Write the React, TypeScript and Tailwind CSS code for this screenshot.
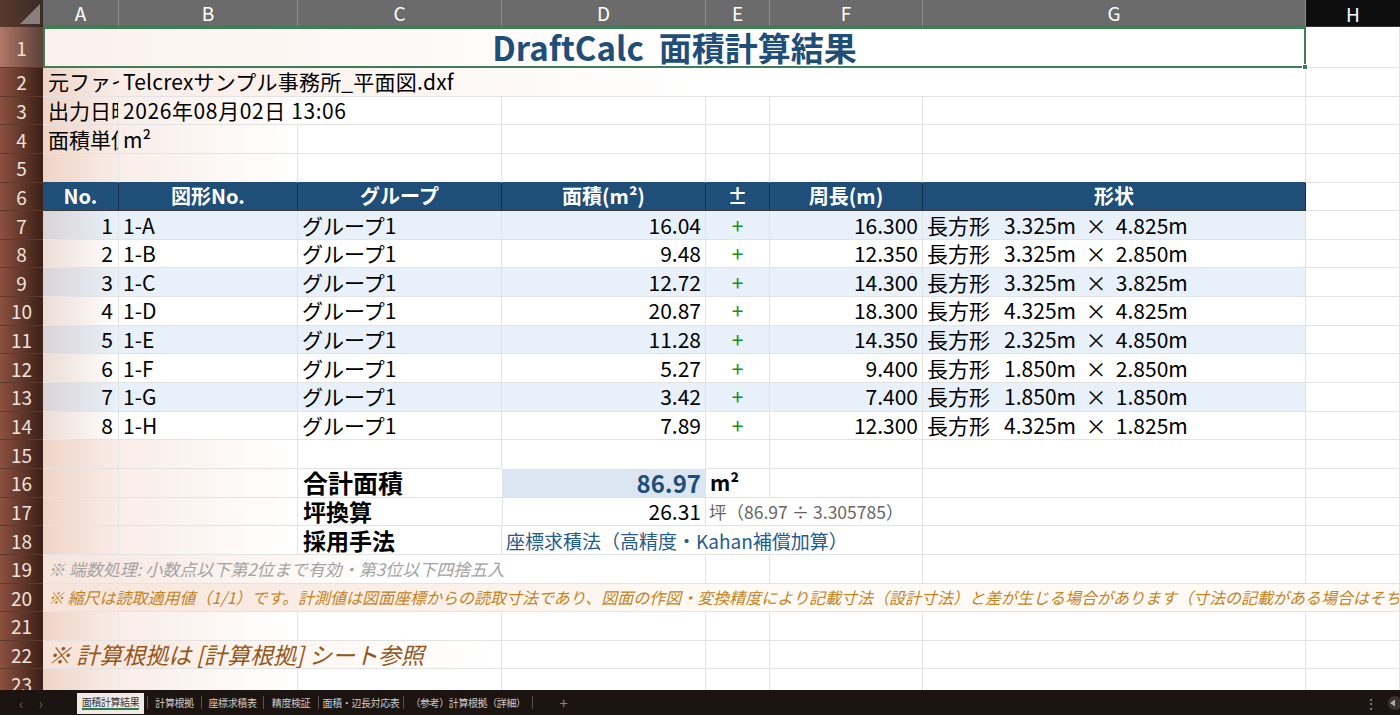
import React from 'react';

const W = {
  A: 'w-[76px]',
  B: 'w-[179px]',
  C: 'w-[204px]',
  D: 'w-[204px]',
  E: 'w-[64px]',
  F: 'w-[153px]',
  G: 'w-[383px]',
};

// warm light falling on the left side of the sheet
const WARM_A = 'bg-linear-to-r from-[#efd4c6] to-[#f9ede7]';
const WARM_B = 'bg-linear-to-r from-[#f9ede7] to-white';

const shapes = [
  { no: 1, id: '1-A', area: '16.04', per: '16.300', a: '3.325m', b: '4.825m' },
  { no: 2, id: '1-B', area: '9.48', per: '12.350', a: '3.325m', b: '2.850m' },
  { no: 3, id: '1-C', area: '12.72', per: '14.300', a: '3.325m', b: '3.825m' },
  { no: 4, id: '1-D', area: '20.87', per: '18.300', a: '4.325m', b: '4.825m' },
  { no: 5, id: '1-E', area: '11.28', per: '14.350', a: '2.325m', b: '4.850m' },
  { no: 6, id: '1-F', area: '5.27', per: '9.400', a: '1.850m', b: '2.850m' },
  { no: 7, id: '1-G', area: '3.42', per: '7.400', a: '1.850m', b: '1.850m' },
  { no: 8, id: '1-H', area: '7.89', per: '12.300', a: '4.325m', b: '1.825m' },
];

const tabs = [
  { label: '計算根拠', w: 'w-[53px]' },
  { label: '座標求積表', w: 'w-[61px]' },
  { label: '精度検証', w: 'w-[54px]' },
  { label: '面積・辺長対応表', w: 'w-[84px]' },
  { label: '（参考）計算根拠（詳細）', w: 'w-[128px]' },
];

function Cell({ w, className = '', children }: { w: string; className?: string; children?: React.ReactNode }) {
  return (
    <div
      className={`${w} shrink-0 h-full flex items-center overflow-hidden whitespace-pre border-r border-b border-[#e3e3e3] ${className}`}
    >
      {children}
    </div>
  );
}

function Row({ n, children, h = 'h-[28.65px]', head = 'from-[#8d5140] to-[#3c2118]' }: { n: number; children?: React.ReactNode; h?: string; head?: string }) {
  return (
    <div className={`flex shrink-0 ${h}`}>
      <div
        className={`w-[43px] shrink-0 h-full flex items-center justify-center text-[19px] text-[#efe2da] bg-linear-to-r ${head} border-b border-[#5e3a2e]`}
      >
        {n}
      </div>
      {children}
    </div>
  );
}

// a run of empty cells; A and B pick up the warm wash
function Empty({ cols }: { cols: (keyof typeof W)[] }) {
  return (
    <>
      {cols.map((c) => (
        <Cell key={c} w={W[c]} className={c === 'A' ? WARM_A : c === 'B' ? WARM_B : ''} />
      ))}
    </>
  );
}

const App: React.FC = () => {
  return (
    <div className="w-[1400px] h-[715px] overflow-hidden flex flex-col bg-white text-black font-['Noto_Sans_CJK_JP',sans-serif] text-[21px] leading-none">
      <div className="h-[690px] shrink-0 overflow-hidden flex flex-col">
        {/* column letters */}
        <div className="flex h-[27px] shrink-0 text-[19px] text-white">
          <div className="w-[43px] shrink-0 relative bg-linear-to-r from-[#5a3a30] to-[#3a2a26]">
            <svg className="absolute right-[3px] bottom-[3px]" width="20" height="20" viewBox="0 0 20 20">
              <polygon points="20,0 20,20 0,20" fill="#8b7f7b" />
            </svg>
          </div>
          {(['A', 'B', 'C', 'D', 'E', 'F', 'G'] as const).map((c) => (
            <div
              key={c}
              className={`${W[c]} shrink-0 flex items-center justify-center bg-[#6b6b6b] border-r border-r-[#8e8e8e] border-b-2 border-b-[#3f7d55]`}
            >
              {c}
            </div>
          ))}
          <div className="flex-1 flex items-center justify-center bg-[#0e0e0e] border-b border-[#333]">H</div>
        </div>

        {/* row 1 */}
        <Row n={1} h="h-[41px]" head="from-[#b07868] to-[#5e4038]">
          <div className="relative w-[1263px] shrink-0 h-full flex items-center justify-center border-2 border-[#3f7d55] bg-linear-to-r from-[#fbf1ec] via-white to-white text-[33px] font-bold text-[#1f4e79] whitespace-pre">
            DraftCalc  面積計算結果
            <div className="absolute right-[-4px] bottom-[-4px] w-[6px] h-[6px] bg-[#3f7d55] border border-white" />
          </div>
          <Cell w="flex-1" />
        </Row>

        {/* rows 2-4 */}
        <Row n={2}>
          <Cell w={W.A} className={`pl-[5px] border-r-0 ${WARM_A}`}>元ファイル</Cell>
          <Cell w="w-[1187px]" className="pl-[4px] tracking-[0.2px] bg-linear-to-r from-[#f9ede7] via-white to-white">Telcrexサンプル事務所_平面図.dxf</Cell>
          <Cell w="flex-1" />
        </Row>
        <Row n={3}>
          <Cell w={W.A} className={`pl-[5px] ${WARM_A}`}>出力日時</Cell>
          <Cell w="w-[383px]" className="pl-[4px] tracking-[0.6px] bg-linear-to-r from-[#f9ede7] via-white to-white">2026年08月02日 13:06</Cell>
          <Empty cols={['D', 'E', 'F', 'G']} />
          <Cell w="flex-1" />
        </Row>
        <Row n={4}>
          <Cell w={W.A} className={`pl-[5px] ${WARM_A}`}>面積単位</Cell>
          <Cell w={W.B} className={`pl-[4px] ${WARM_B}`}>m²</Cell>
          <Empty cols={['C', 'D', 'E', 'F', 'G']} />
          <Cell w="flex-1" />
        </Row>
        <Row n={5}>
          {(['A', 'B', 'C', 'D', 'E', 'F', 'G'] as const).map((c) => (
            <Cell
              key={c}
              w={W[c]}
              className={`border-b-[#1f4e79] ${c === 'A' ? WARM_A : c === 'B' ? WARM_B : ''}`}
            />
          ))}
          <Cell w="flex-1" />
        </Row>

        {/* table header */}
        <Row n={6}>
          {[
            ['A', 'No.'],
            ['B', '図形No.'],
            ['C', 'グループ'],
            ['D', '面積(m²)'],
            ['E', '±'],
            ['F', '周長(m)'],
            ['G', '形状'],
          ].map(([c, t]) => (
            <Cell
              key={c}
              w={W[c as keyof typeof W]}
              className="justify-center bg-[#1f4e79] text-white font-bold text-[20px] border-r-[#12304d] border-b-[#3a3a3a]"
            >
              {t}
            </Cell>
          ))}
          <Cell w="flex-1" />
        </Row>

        {/* table body */}
        {shapes.map((s, i) => {
          const blue = i % 2 === 0;
          const bg = blue ? 'bg-[#e8f1f9]' : 'bg-white';
          const aBg = blue
            ? 'bg-linear-to-r from-[#d9d3d6] to-[#e8f1f9]'
            : 'bg-linear-to-r from-[#ecdcd5] to-white';
          const line = 'border-[#6a6a6a]';
          return (
            <Row key={s.no} n={7 + i}>
              <Cell w={W.A} className={`${aBg} ${line} justify-end pr-[5px]`}>{s.no}</Cell>
              <Cell w={W.B} className={`${bg} ${line} pl-[4px]`}>{s.id}</Cell>
              <Cell w={W.C} className={`${bg} ${line} pl-[4px]`}>グループ1</Cell>
              <Cell w={W.D} className={`${bg} ${line} justify-end pr-[4px]`}>{s.area}</Cell>
              <Cell w={W.E} className={`${bg} ${line} justify-center text-[#1e8c1e]`}>+</Cell>
              <Cell w={W.F} className={`${bg} ${line} justify-end pr-[4px]`}>{s.per}</Cell>
              <Cell w={W.G} className={`${bg} ${line} pl-[4px]`}>{`長方形   ${s.a}  ×  ${s.b}`}</Cell>
              <Cell w="flex-1" />
            </Row>
          );
        })}

        <Row n={15}>
          <Empty cols={['A', 'B', 'C']} />
          <Cell w={W.D} className="border-b-0" />
          <Empty cols={['E', 'F', 'G']} />
          <Cell w="flex-1" />
        </Row>

        {/* totals */}
        <Row n={16}>
          <Empty cols={['A', 'B']} />
          <Cell w={W.C} className="pl-[5px] font-bold text-[25px] border-r-0">合計面積</Cell>
          <Cell w={W.D} className="justify-end pr-[4px] bg-[#dbe6f2] border border-[#3d3d3d] font-bold text-[24px] text-[#1f4e79]">
            86.97
          </Cell>
          <Cell w={W.E} className="pl-[4px] font-bold text-[21px]">m²</Cell>
          <Empty cols={['F', 'G']} />
          <Cell w="flex-1" />
        </Row>
        <Row n={17}>
          <Empty cols={['A', 'B']} />
          <Cell w={W.C} className="pl-[5px] font-bold text-[23px] border-r-0">坪換算</Cell>
          <Cell w={W.D} className="justify-end pr-[4px] border-x border-b border-[#3d3d3d]">26.31</Cell>
          <Cell w="w-[217px]" className="pl-[3px] text-[17.5px] text-[#666666]">坪（86.97 ÷ 3.305785）</Cell>
          <Cell w={W.G} />
          <Cell w="flex-1" />
        </Row>
        <Row n={18}>
          <Empty cols={['A', 'B']} />
          <Cell w={W.C} className="pl-[5px] font-bold text-[23px]">採用手法</Cell>
          <Cell w="w-[421px]" className="pl-[4px] text-[19px] text-[#245b8f]">座標求積法（高精度・Kahan補償加算）</Cell>
          <Cell w={W.G} />
          <Cell w="flex-1" />
        </Row>

        {/* notes */}
        <Row n={19}>
          <Cell w="w-[663px]" className="pl-[5px] italic text-[17px] text-[#a3a3a3] bg-linear-to-r from-[#f6e4db] via-white to-white">
            ※ 端数処理: 小数点以下第2位まで有効・第3位以下四捨五入
          </Cell>
          <Empty cols={['E', 'F', 'G']} />
          <Cell w="flex-1" />
        </Row>
        <Row n={20}>
          <Cell w="flex-1" className="pl-[5px] italic text-[16px] text-[#c4831c] bg-linear-to-r from-[#f6e4db] via-[#fffaf5] to-[#fffaf5]">
            ※ 縮尺は読取適用値（1/1）です。計測値は図面座標からの読取寸法であり、図面の作図・変換精度により記載寸法（設計寸法）と差が生じる場合があります（寸法の記載がある場合はそちらを優先してください）
          </Cell>
        </Row>
        <Row n={21}>
          <Empty cols={['A', 'B', 'C', 'D', 'E', 'F', 'G']} />
          <Cell w="flex-1" />
        </Row>
        <Row n={22}>
          <Cell w="w-[459px]" className="pl-[5px] italic text-[23px] text-[#94571a] bg-linear-to-r from-[#f6e2d8] via-[#fcf6f2] to-white">
            ※ 計算根拠は [計算根拠] シート参照
          </Cell>
          <Empty cols={['D', 'E', 'F', 'G']} />
          <Cell w="flex-1" />
        </Row>
        <Row n={23}>
          <Empty cols={['A', 'B', 'C', 'D', 'E', 'F', 'G']} />
          <Cell w="flex-1" />
        </Row>
      </div>

      {/* sheet tabs */}
      <div className="h-[25px] shrink-0 flex items-stretch bg-[#1b1411] text-[10px] tracking-[-0.4px] text-[#d2cbc7]">
        <div className="w-[77px] shrink-0 flex items-center text-[14px] text-[#6f6662]">
          <span className="ml-[19px]">‹</span>
          <span className="ml-[16px]">›</span>
        </div>
        <div className="w-[67px] shrink-0 mt-[3px] mb-[1px] flex items-center justify-center bg-[#f1ebe7] text-[#333]">
          <span className="border-b-2 border-[#2f7a4c] pb-[1px]">面積計算結果</span>
        </div>
        <div className="w-[3px] shrink-0" />
        {tabs.map((t) => (
          <React.Fragment key={t.label}>
            <div className="w-px shrink-0 my-[6px] bg-[#5a504c]" />
            <div className={`${t.w} shrink-0 flex items-center justify-center`}>{t.label}</div>
          </React.Fragment>
        ))}
        <div className="w-px shrink-0 my-[6px] bg-[#5a504c]" />
        <div className="w-[61px] shrink-0 flex items-center justify-center text-[15px] text-[#8c8380]">+</div>
        <div className="ml-auto flex items-center gap-[8px] text-[#9a918d]">
          <span className="text-[14px]">⋮</span>
          <svg width="14" height="14" viewBox="0 0 14 14">
            <circle cx="9" cy="7" r="7" fill="#3a3330" />
            <polygon points="4,7 9,3.5 9,10.5" fill="#b5aca8" />
          </svg>
        </div>
      </div>
    </div>
  );
};

export default App;
